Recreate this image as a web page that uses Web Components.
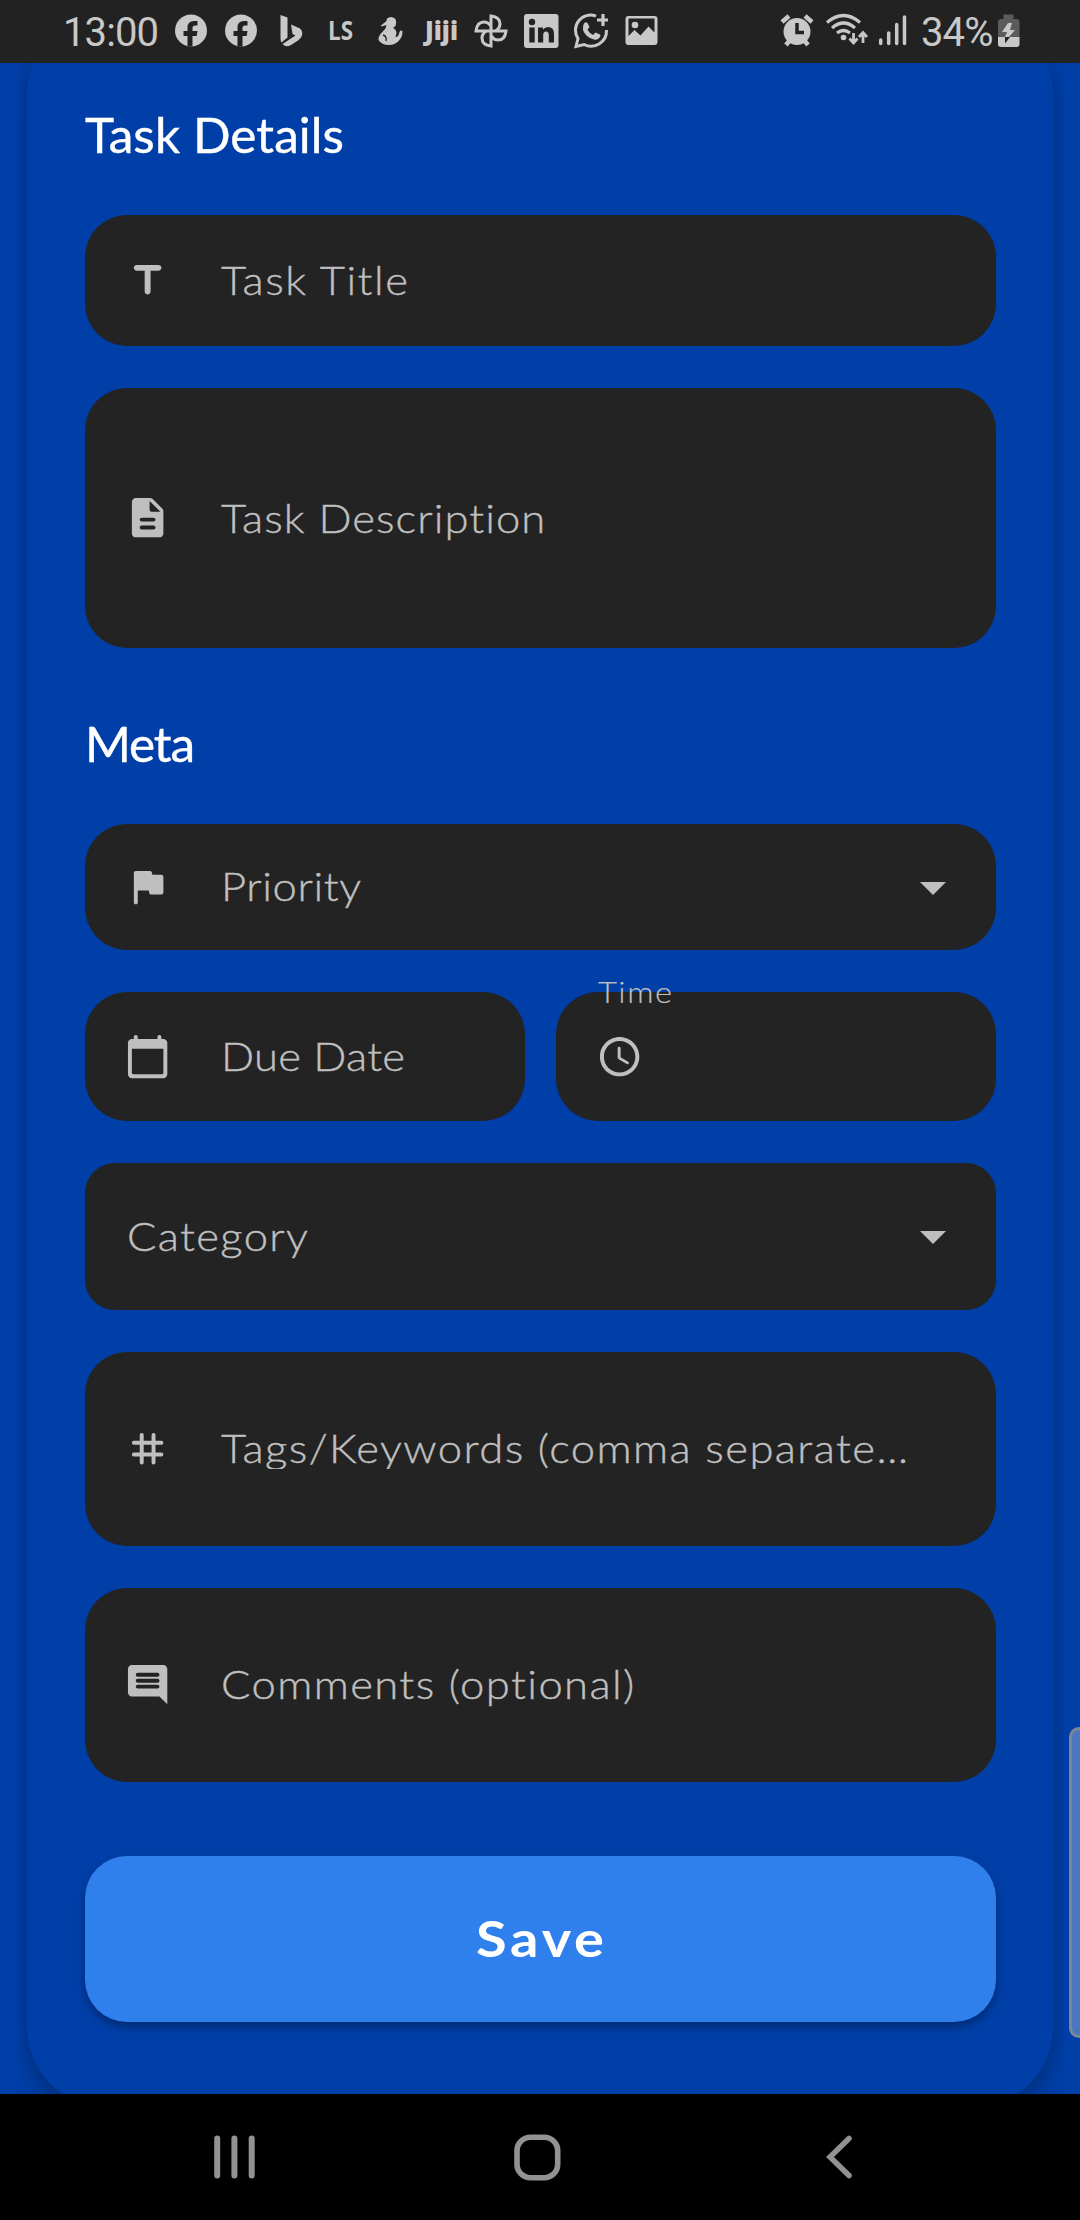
<!DOCTYPE html>
<html lang="en">
<head>
<meta charset="utf-8">
<title>Task Details</title>
<style>
html,body{margin:0;padding:0;background:#003fa8}
body{width:1080px;height:2220px;overflow:hidden;font-family:Lato,"Open Sans",sans-serif}
</style>
</head>
<body>
<task-screen></task-screen>
<script>
const define = (name, html, ready) => {
  const t = document.createElement('template');
  t.innerHTML = html;
  customElements.define(name, class extends HTMLElement {
    constructor() {
      super();
      this.attachShadow({mode: 'open'}).append(t.content.cloneNode(true));
    }
    connectedCallback() { if (ready) ready(this, this.shadowRoot); }
  });
};

/* Text set to a given advance width: glyphs widened by "stretch", the rest as tracking. */
define('fit-text', `
<style>:host{display:block;white-space:nowrap}span{display:inline-block;white-space:pre;transform-origin:0 50%}</style>
<span></span>`, (el, root) => {
  const s = root.querySelector('span'), text = el.getAttribute('text');
  const k = +(el.getAttribute('stretch') || 1), target = +el.getAttribute('width');
  s.textContent = text;
  const w = s.getBoundingClientRect().width;
  s.style.letterSpacing = ((target / k - w) / (text.length - 1)).toFixed(3) + 'px';
  s.style.transform = `scaleX(${k})`;
  el.style.width = target + 'px';
});

const ICONS = {
  title: '<path d="M5 5.5C5 6.33 5.67 7 6.5 7h4v10.5c0 .83.67 1.5 1.5 1.5s1.5-.67 1.5-1.5V7h4c.83 0 1.5-.67 1.5-1.5S18.33 4 17.5 4h-11C5.67 4 5 4.67 5 5.5z"/>',
  description: '<path d="M14.59 2.59c-.38-.38-.89-.59-1.42-.59H6c-1.1 0-2 .9-2 2v16c0 1.1.89 2 1.99 2H18c1.1 0 2-.9 2-2V8.83c0-.53-.21-1.04-.59-1.41l-4.82-4.83zM15 18H9c-.55 0-1-.45-1-1s.45-1 1-1h6c.55 0 1 .45 1 1s-.45 1-1 1zm0-4H9c-.55 0-1-.45-1-1s.45-1 1-1h6c.55 0 1 .45 1 1s-.45 1-1 1zm-2-6V3.5L18.5 9H14c-.55 0-1-.45-1-1z"/>',
  flag: '<path d="M14.4 6l-.24-1.2c-.09-.46-.5-.8-.98-.8H6c-.55 0-1 .45-1 1v15c0 .55.45 1 1 1s1-.45 1-1v-6h5.6l.24 1.2c.09.47.5.8.98.8H19c.55 0 1-.45 1-1V7c0-.55-.45-1-1-1h-4.6z"/>',
  calendar: '<path d="M20 3h-1V2c0-.55-.45-1-1-1s-1 .45-1 1v1H7V2c0-.55-.45-1-1-1s-1 .45-1 1v1H4c-1.1 0-2 .9-2 2v16c0 1.1.9 2 2 2h16c1.1 0 2-.9 2-2V5c0-1.1-.9-2-2-2zm-1 18H5c-.55 0-1-.45-1-1V8h16v12c0 .55-.45 1-1 1z"/>',
  clock: '<path d="M11.99 2C6.47 2 2 6.48 2 12s4.47 10 9.99 10C17.52 22 22 17.52 22 12S17.52 2 11.99 2zM12 20c-4.42 0-8-3.58-8-8s3.58-8 8-8 8 3.58 8 8-3.58 8-8 8zm-.22-13h-.06c-.4 0-.72.32-.72.72v4.72c0 .35.18.68.49.86l4.15 2.49c.34.2.78.1.98-.24.21-.34.1-.79-.25-.99l-3.87-2.3V7.72c0-.4-.32-.72-.72-.72z"/>',
  tag: '<path fill="none" stroke="currentColor" stroke-width="2" stroke-linecap="round" d="M9 5v14M15 5v14M5 9h14M5 15h14"/>',
  comment: '<path fill-rule="evenodd" d="M21.99 4c0-1.1-.89-2-1.99-2H4c-1.1 0-2 .9-2 2v12c0 1.1.9 2 2 2h14l4 4-.01-18zM17 14H7c-.55 0-1-.45-1-1s.45-1 1-1h10c.55 0 1 .45 1 1s-.45 1-1 1zm0-3H7c-.55 0-1-.45-1-1s.45-1 1-1h10c.55 0 1 .45 1 1s-.45 1-1 1zm0-3H7c-.55 0-1-.45-1-1s.45-1 1-1h10c.55 0 1 .45 1 1s-.45 1-1 1z"/>'
};

define('form-field', `
<style>
:host{display:flex;align-items:center;box-sizing:border-box;position:relative;background:#232323;border-radius:42px;color:#bfbfbf;padding:0 50px 0 39.5px;font-size:40px;font-weight:300;line-height:48px}
:host([select]){padding-left:42px;border-radius:30px}
:host([icon]){padding-left:39.5px;border-radius:42px}
.icon{width:47.25px;height:47.25px;flex:none;fill:currentColor;margin-right:50px}
.label{flex:1;min-width:0;padding-bottom:1px;-webkit-text-stroke:.4px #bfbfbf}
:host([clipped]) .label{height:40px;padding:0;overflow:hidden;display:flex;align-items:flex-end}
:host([clipped]) fit-text{margin-bottom:-3px}
.arrow{width:26px;height:13px;flex:none;fill:currentColor;margin-top:3px}
.label.float{position:absolute;left:42px;top:-19px;font-size:30px;line-height:36px;-webkit-text-stroke-width:.2px}
</style>
<svg class="icon" viewBox="0 0 24 24"></svg><div class="label"></div>
<svg class="arrow" viewBox="0 0 26 13"><path d="M0 0h26L13 13z"/></svg>`, (el, root) => {
  const icon = root.querySelector('.icon'), label = root.querySelector('.label');
  if (el.hasAttribute('icon')) icon.innerHTML = ICONS[el.getAttribute('icon')]; else icon.remove();
  if (!el.hasAttribute('select')) root.querySelector('.arrow').remove();
  if (el.hasAttribute('floating')) label.classList.add('float');
  label.innerHTML = `<fit-text stretch="1.09" text="${el.getAttribute('label')}" width="${el.getAttribute('fit')}"></fit-text>`;
});

define('section-title', `
<style>:host{display:block;color:#fff;font-size:48px;line-height:60px;font-weight:400;-webkit-text-stroke:.4px #fff}</style><slot></slot>`);

define('save-button', `
<style>:host{display:flex;align-items:center;justify-content:center;box-sizing:border-box;background:#2f80ed;color:#fff;border-radius:42px;box-shadow:0 5px 10px rgba(0,0,0,.32);font-size:50px;font-weight:700;line-height:60px;padding-bottom:2px}</style><slot></slot>`);

define('status-bar', `
<style>
:host{display:flex;height:63px;background:#222;color:#c8c8c8;font-family:Roboto,sans-serif;font-size:40px;line-height:65px;padding-left:63px;box-sizing:border-box;overflow:hidden}
svg{display:block;flex:none;fill:#c8c8c8}
.s{fill:none;stroke:#c8c8c8}
.d{fill:#222}
.time{width:103px}.icons{display:flex;width:606px}.pct{width:72px;padding-left:2px}
</style>
<div class="time"><fit-text text="13:00" width="96"></fit-text></div>
<div class="icons">
<svg width="50" height="63"><circle cx="25" cy="30.5" r="16"/><path class="d" d="M21.5 46.5V36h-4v-5h4v-3.500q0-6.500 6.500-6.500h3.500v4.500h-2.500q-2.500 0-2.500 2.500v3h5l-.8 5h-4.200v10.500z"/></svg>
<svg width="50" height="63"><circle cx="25" cy="30.5" r="16"/><path class="d" d="M21.500 46.500V36h-4v-5h4v-3.500q0-6.500 6.500-6.500h3.500v4.500h-2.500q-2.500 0-2.500 2.500v3h5l-.8 5h-4.200v10.500z"/></svg>
<svg width="50" height="63"><path d="M14.500 15l7 2.500v20l-6 5q-1-2-1-4zM25 24.500l9 4q3 2.500 2 7-1 3-4 5l-7 4.500q-5 3-8.500-1l13-8.500-3-1.500z"/></svg>
<svg width="50" height="63"><text x="12" y="40" font-family="Open Sans" font-weight="700" font-size="26" textLength="25" lengthAdjust="spacingAndGlyphs">LS</text></svg>
<svg width="50" height="63"><path d="M21 18.500q4-3 8 0 2 3 .5 7.500l-2.500 2q3 1 3.500 5l-1 4q3 .5 4-5l1-1.500 2 .5q0 6-3 9-4 5-10.500 5-7.500 0-10.500-5-.5-3 2-6l5-5.500 1-3.500-5 1.500q-1-.8 0-1.500l5-4z"/><path class="s" style="stroke:#222" stroke-width="1.300" d="M17 35q4 1 3 6"/></svg>
<svg width="50" height="63"><text x="9" y="39.500" font-family="Open Sans" font-weight="800" font-size="27" textLength="33" lengthAdjust="spacingAndGlyphs">Jiji</text></svg>
<svg width="50" height="63"><g class="s" stroke-width="3"><path d="M25 31V16q9 1 9 8 0 4-4 7"/><path d="M25 31V16q9 1 9 8 0 4-4 7" transform="rotate(90 25 31)"/><path d="M25 31V16q9 1 9 8 0 4-4 7" transform="rotate(180 25 31)"/><path d="M25 31V16q9 1 9 8 0 4-4 7" transform="rotate(270 25 31)"/></g></svg>
<svg width="50" height="63"><rect x="8" y="14" width="34.500" height="34" rx="3"/><circle class="d" cx="16" cy="22" r="3.200"/><path class="d" d="M13.300 27.500h5.400V42.500h-5.400zM22 27.500h5v2q2-2.500 5-2.500 6 0 6 7v8.500h-5.200V35q0-3.500-2.700-3.500-2.900 0-2.900 3.500v7.500H22z"/></svg>
<svg width="50" height="63"><path class="s" stroke-width="3" d="M30 16.200A15 15 0 0 0 12 38.500L10 46.500l8-2A15.500 15.500 0 0 0 40.500 30"/><path class="s" stroke-width="3.200" d="M37 14v12M31 20h11"/><path d="M18 23.500q2-2 3.500-.5l2 4-2 2.700q2 3.600 5.500 5.300l2.500-2.500 4.500 2q1 1 0 2.500-2 3.500-6 2.500-8.500-2-11-9.500-.5-4 1-6.500z"/></svg>
<svg width="50" height="63"><path fill-rule="evenodd" d="M12.500 16h26q3 0 3 3v23q0 3-3 3h-26q-3 0-3-3V19q0-3 3-3zM12.500 18.500V36l6-6 6 5.500 8-9 6 6V18.500z"/><circle cx="19" cy="25" r="3.300"/></svg>
</div>
<svg width="56" height="63" viewBox="772 0 56 63"><circle cx="797" cy="31.500" r="13.500"/><path class="s" stroke-width="4.500" d="M782 22l7-6M812 22l-7-6M786 45l4-5M808 45l-4-5"/><path class="s" style="stroke:#222" stroke-width="3.500" d="M797 23v9.500h7"/></svg>
<svg width="47" height="63" viewBox="828 0 47 63" style="overflow:visible"><g class="s" stroke-width="3.200"><path d="M827 22.500q16.500-14 33 0M832 28q11.500-10 23 0M837 33q6.500-5 13 0"/></g><circle cx="843.500" cy="37.500" r="2.800"/><path class="s" stroke-width="2.800" d="M853.500 33v10M849.500 38.500l4 4.500 4-4.500M863 43V33M859 37l4-4.500 4 4.500"/></svg>
<svg width="44" height="63" viewBox="875 0 44 63"><g class="s" stroke-width="3.500" stroke-linecap="round"><path d="M880.700 40v3.500M888.700 33v10.500M896.700 24.500v19M904.500 17v26.500"/></g></svg>
<div class="pct"><fit-text text="34%" width="72.500"></fit-text></div>
<svg width="30" height="63" viewBox="993 0 30 63"><path fill="#5b5b5b" d="M1003.500 14.500h10V19h3q3 0 3 3v15h-21.500V22q0-3 3-3h2.500z"/><path d="M998 37h21.500v7q0 3-3 3h-15.500q-3 0-3-3z"/><path d="M1008 23h4l-2 7h5l-6 7h-4l2-5h-5z"/><path class="d" d="M1005 37h5l-5 6.500z"/></svg>`);

define('nav-bar', `
<style>:host{display:flex;justify-content:space-between;align-items:center;height:126px;box-sizing:border-box;background:#000;padding:0 228.500px 0 214px}
svg{display:block;fill:none;stroke:#929292}</style>
<svg width="41" height="44" stroke-width="6" stroke-linecap="round"><path d="M3.200 3.500v37M20.400 3.500v37M37.700 3.500v37"/></svg>
<svg width="47" height="47" stroke-width="5.600" style="margin-right:6px"><rect x="3" y="3.300" width="40.700" height="40.400" rx="13.500"/></svg>
<svg width="26" height="44" stroke-width="5.500" stroke-linecap="round"><path d="M23 3.500L4 22l19 18.500"/></svg>`);

define('task-screen', `
<style>
:host{display:flex;flex-direction:column;width:1080px;height:2220px;position:relative}
main{height:2031px;overflow:hidden;margin:0 16.500px 0 17px}
.card{margin:-53px 10.500px 0 10px;height:2100px;box-sizing:border-box;border-radius:84px;background:#003fa8;box-shadow:0 12px 24px rgba(0,0,0,.28);padding:95px 57px 0 57.500px;display:flex;flex-direction:column}
.row{display:flex;gap:31.500px;height:128.500px;margin:42.500px 0 42px}
.row form-field{flex:1}
.thumb{position:absolute;left:1068.500px;top:1727px;width:20px;height:311px;box-sizing:border-box;border:3px solid #7b8797;border-radius:12px;background:#4d76c0}
.clip{position:absolute;inset:0;overflow:hidden;pointer-events:none}
</style>
<status-bar></status-bar>
<main><div class="card">
<section-title style="height:110px"><fit-text stretch="1.03" text="Task Details" width="259"></fit-text></section-title>
<form-field icon="title" label="Task Title" fit="187" style="height:130.500px"></form-field>
<form-field icon="description" label="Task Description" fit="325" style="height:260px;margin-top:42.500px"></form-field>
<section-title style="margin-top:66px;height:110px"><fit-text stretch="1.03" text="Meta" width="110"></fit-text></section-title>
<form-field icon="flag" select label="Priority" fit="140" style="height:125.500px"></form-field>
<div class="row"><form-field icon="calendar" label="Due Date" fit="184"></form-field><form-field icon="clock" floating label="Time" fit="74"></form-field></div>
<form-field select label="Category" fit="181" style="height:147px"></form-field>
<form-field icon="tag" clipped label="Tags/Keywords (comma separate…" fit="687" style="height:194px;margin-top:42px;padding-right:20px"></form-field>
<form-field icon="comment" label="Comments (optional)" fit="414" style="height:194px;margin-top:42px"></form-field>
<save-button style="height:166px;margin-top:74px"><fit-text stretch="1.12" text="Save" width="128"></fit-text></save-button>
</div></main>
<nav-bar></nav-bar>
<div class="clip"><div class="thumb"></div></div>`);
</script>
</body>
</html>
